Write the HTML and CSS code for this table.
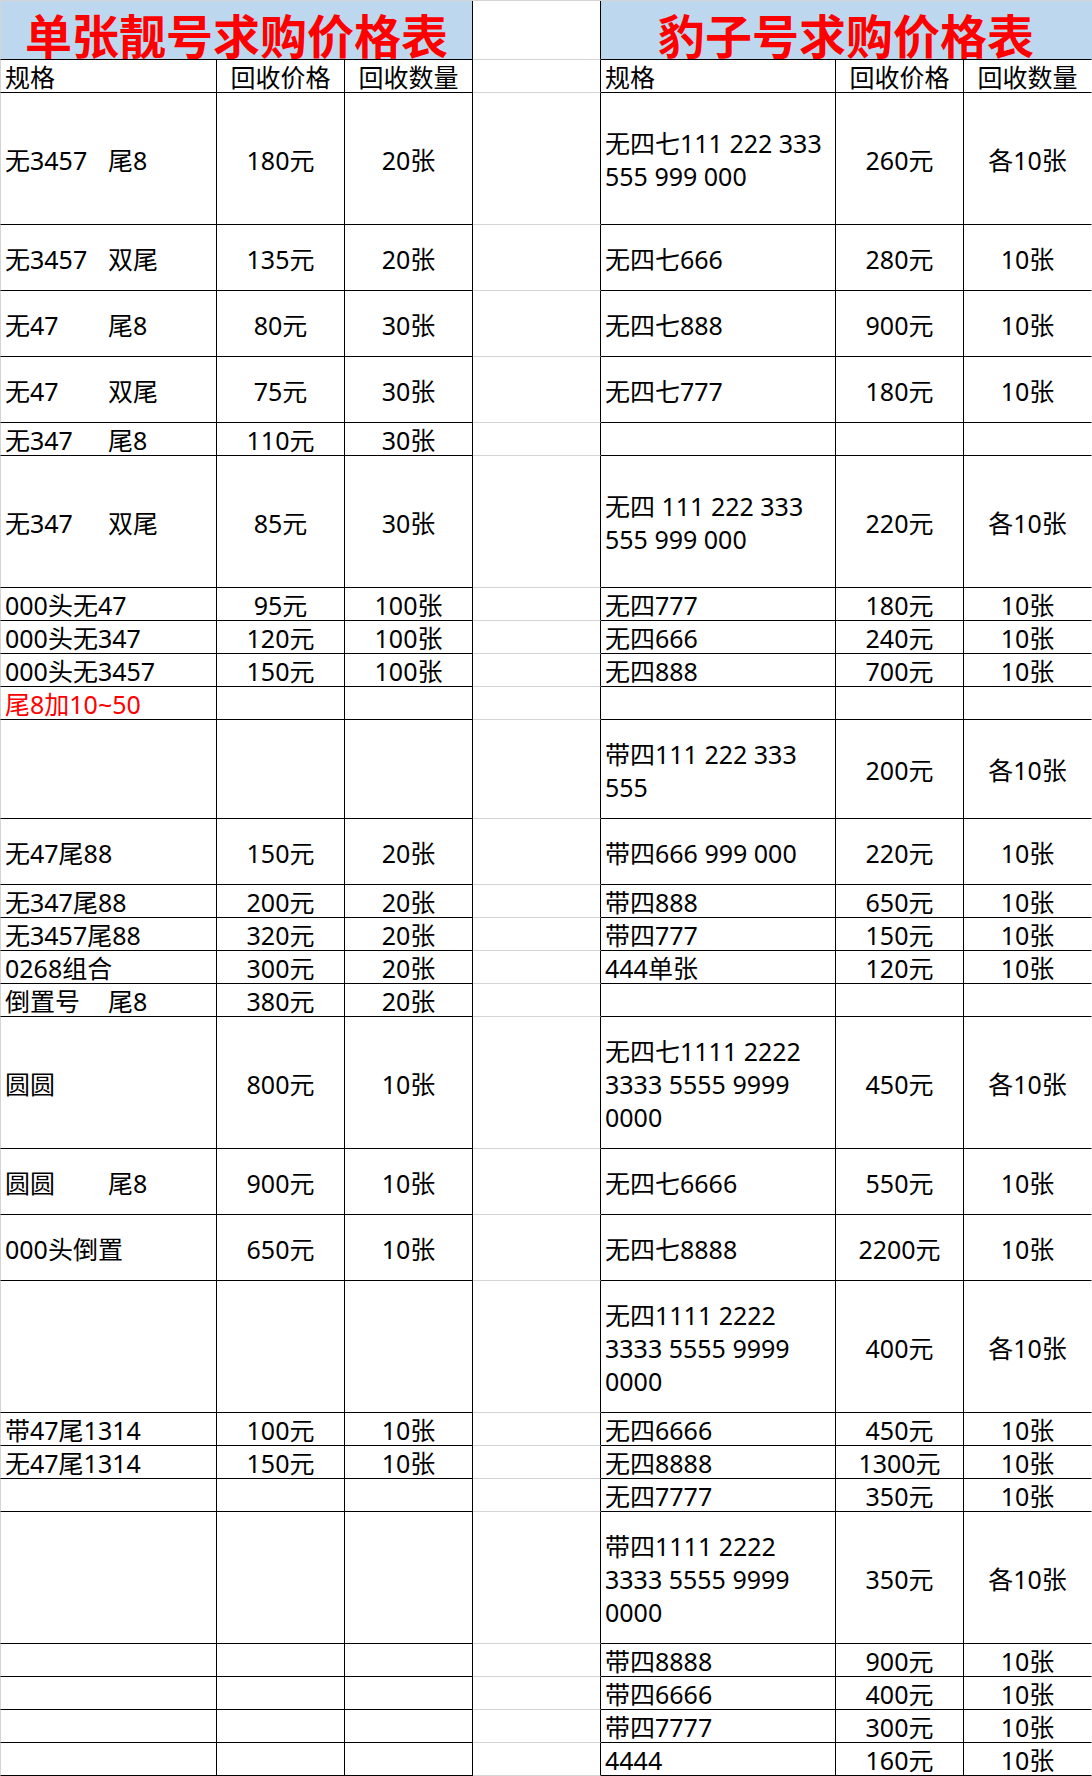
FILE: index.html
```html
<!DOCTYPE html>
<html lang="zh-CN">
<head>
<meta charset="utf-8">
<title>求购价格表</title>
<link rel="stylesheet" href="styles.css">
</head>
<body>
<div class="sheet">
  <div class="row title-row">
    <div class="title first"><span>单张靓号求购价格表</span></div>
    <div class="gap"></div>
    <div class="title"><span>豹子号求购价格表</span></div>
  </div>
  <div class="row h1">
    <div class="c first spec"><span>规格</span></div>
    <div class="c num"><span>回收价格</span></div>
    <div class="c num"><span>回收数量</span></div>
    <div class="gap"></div>
    <div class="c spec"><span>规格</span></div>
    <div class="c num"><span>回收价格</span></div>
    <div class="c num last"><span>回收数量</span></div>
  </div>

  <div class="row h4">
    <div class="c first spec"><span><span class="k">无3457</span>尾8</span></div>
    <div class="c num"><span>180元</span></div>
    <div class="c num"><span>20张</span></div>
    <div class="gap"></div>
    <div class="c spec"><span>无四七111 222 333<br>555 999 000</span></div>
    <div class="c num"><span>260元</span></div>
    <div class="c num last"><span>各10张</span></div>
  </div>
  <div class="row h2">
    <div class="c first spec"><span><span class="k">无3457</span>双尾</span></div>
    <div class="c num"><span>135元</span></div>
    <div class="c num"><span>20张</span></div>
    <div class="gap"></div>
    <div class="c spec"><span>无四七666</span></div>
    <div class="c num"><span>280元</span></div>
    <div class="c num last"><span>10张</span></div>
  </div>
  <div class="row h2">
    <div class="c first spec"><span><span class="k">无47</span>尾8</span></div>
    <div class="c num"><span>80元</span></div>
    <div class="c num"><span>30张</span></div>
    <div class="gap"></div>
    <div class="c spec"><span>无四七888</span></div>
    <div class="c num"><span>900元</span></div>
    <div class="c num last"><span>10张</span></div>
  </div>
  <div class="row h2">
    <div class="c first spec"><span><span class="k">无47</span>双尾</span></div>
    <div class="c num"><span>75元</span></div>
    <div class="c num"><span>30张</span></div>
    <div class="gap"></div>
    <div class="c spec"><span>无四七777</span></div>
    <div class="c num"><span>180元</span></div>
    <div class="c num last"><span>10张</span></div>
  </div>
  <div class="row h1">
    <div class="c first spec"><span><span class="k">无347</span>尾8</span></div>
    <div class="c num"><span>110元</span></div>
    <div class="c num"><span>30张</span></div>
    <div class="gap"></div>
    <div class="c spec"></div>
    <div class="c num"></div>
    <div class="c num last"></div>
  </div>
  <div class="row h4">
    <div class="c first spec"><span><span class="k">无347</span>双尾</span></div>
    <div class="c num"><span>85元</span></div>
    <div class="c num"><span>30张</span></div>
    <div class="gap"></div>
    <div class="c spec"><span>无四 111 222 333<br>555 999 000</span></div>
    <div class="c num"><span>220元</span></div>
    <div class="c num last"><span>各10张</span></div>
  </div>
  <div class="row h1">
    <div class="c first spec"><span>000头无47</span></div>
    <div class="c num"><span>95元</span></div>
    <div class="c num"><span>100张</span></div>
    <div class="gap"></div>
    <div class="c spec"><span>无四777</span></div>
    <div class="c num"><span>180元</span></div>
    <div class="c num last"><span>10张</span></div>
  </div>
  <div class="row h1">
    <div class="c first spec"><span>000头无347</span></div>
    <div class="c num"><span>120元</span></div>
    <div class="c num"><span>100张</span></div>
    <div class="gap"></div>
    <div class="c spec"><span>无四666</span></div>
    <div class="c num"><span>240元</span></div>
    <div class="c num last"><span>10张</span></div>
  </div>
  <div class="row h1">
    <div class="c first spec"><span>000头无3457</span></div>
    <div class="c num"><span>150元</span></div>
    <div class="c num"><span>100张</span></div>
    <div class="gap"></div>
    <div class="c spec"><span>无四888</span></div>
    <div class="c num"><span>700元</span></div>
    <div class="c num last"><span>10张</span></div>
  </div>
  <div class="row h1">
    <div class="c first spec red"><span>尾8加10~50</span></div>
    <div class="c num"></div>
    <div class="c num"></div>
    <div class="gap"></div>
    <div class="c spec"></div>
    <div class="c num"></div>
    <div class="c num last"></div>
  </div>
  <div class="row h3">
    <div class="c first spec"></div>
    <div class="c num"></div>
    <div class="c num"></div>
    <div class="gap"></div>
    <div class="c spec"><span>带四111 222 333<br>555</span></div>
    <div class="c num"><span>200元</span></div>
    <div class="c num last"><span>各10张</span></div>
  </div>
  <div class="row h2">
    <div class="c first spec"><span>无47尾88</span></div>
    <div class="c num"><span>150元</span></div>
    <div class="c num"><span>20张</span></div>
    <div class="gap"></div>
    <div class="c spec"><span>带四666 999 000</span></div>
    <div class="c num"><span>220元</span></div>
    <div class="c num last"><span>10张</span></div>
  </div>
  <div class="row h1">
    <div class="c first spec"><span>无347尾88</span></div>
    <div class="c num"><span>200元</span></div>
    <div class="c num"><span>20张</span></div>
    <div class="gap"></div>
    <div class="c spec"><span>带四888</span></div>
    <div class="c num"><span>650元</span></div>
    <div class="c num last"><span>10张</span></div>
  </div>
  <div class="row h1">
    <div class="c first spec"><span>无3457尾88</span></div>
    <div class="c num"><span>320元</span></div>
    <div class="c num"><span>20张</span></div>
    <div class="gap"></div>
    <div class="c spec"><span>带四777</span></div>
    <div class="c num"><span>150元</span></div>
    <div class="c num last"><span>10张</span></div>
  </div>
  <div class="row h1">
    <div class="c first spec"><span>0268组合</span></div>
    <div class="c num"><span>300元</span></div>
    <div class="c num"><span>20张</span></div>
    <div class="gap"></div>
    <div class="c spec"><span>444单张</span></div>
    <div class="c num"><span>120元</span></div>
    <div class="c num last"><span>10张</span></div>
  </div>
  <div class="row h1">
    <div class="c first spec"><span><span class="k">倒置号</span>尾8</span></div>
    <div class="c num"><span>380元</span></div>
    <div class="c num"><span>20张</span></div>
    <div class="gap"></div>
    <div class="c spec"></div>
    <div class="c num"></div>
    <div class="c num last"></div>
  </div>
  <div class="row h4">
    <div class="c first spec"><span>圆圆</span></div>
    <div class="c num"><span>800元</span></div>
    <div class="c num"><span>10张</span></div>
    <div class="gap"></div>
    <div class="c spec"><span>无四七1111 2222<br>3333 5555 9999<br>0000</span></div>
    <div class="c num"><span>450元</span></div>
    <div class="c num last"><span>各10张</span></div>
  </div>
  <div class="row h2">
    <div class="c first spec"><span><span class="k">圆圆</span>尾8</span></div>
    <div class="c num"><span>900元</span></div>
    <div class="c num"><span>10张</span></div>
    <div class="gap"></div>
    <div class="c spec"><span>无四七6666</span></div>
    <div class="c num"><span>550元</span></div>
    <div class="c num last"><span>10张</span></div>
  </div>
  <div class="row h2">
    <div class="c first spec"><span>000头倒置</span></div>
    <div class="c num"><span>650元</span></div>
    <div class="c num"><span>10张</span></div>
    <div class="gap"></div>
    <div class="c spec"><span>无四七8888</span></div>
    <div class="c num"><span>2200元</span></div>
    <div class="c num last"><span>10张</span></div>
  </div>
  <div class="row h4">
    <div class="c first spec"></div>
    <div class="c num"></div>
    <div class="c num"></div>
    <div class="gap"></div>
    <div class="c spec"><span>无四1111 2222<br>3333 5555 9999<br>0000</span></div>
    <div class="c num"><span>400元</span></div>
    <div class="c num last"><span>各10张</span></div>
  </div>
  <div class="row h1">
    <div class="c first spec"><span>带47尾1314</span></div>
    <div class="c num"><span>100元</span></div>
    <div class="c num"><span>10张</span></div>
    <div class="gap"></div>
    <div class="c spec"><span>无四6666</span></div>
    <div class="c num"><span>450元</span></div>
    <div class="c num last"><span>10张</span></div>
  </div>
  <div class="row h1">
    <div class="c first spec"><span>无47尾1314</span></div>
    <div class="c num"><span>150元</span></div>
    <div class="c num"><span>10张</span></div>
    <div class="gap"></div>
    <div class="c spec"><span>无四8888</span></div>
    <div class="c num"><span>1300元</span></div>
    <div class="c num last"><span>10张</span></div>
  </div>
  <div class="row h1">
    <div class="c first spec"></div>
    <div class="c num"></div>
    <div class="c num"></div>
    <div class="gap"></div>
    <div class="c spec"><span>无四7777</span></div>
    <div class="c num"><span>350元</span></div>
    <div class="c num last"><span>10张</span></div>
  </div>
  <div class="row h4">
    <div class="c first spec"></div>
    <div class="c num"></div>
    <div class="c num"></div>
    <div class="gap"></div>
    <div class="c spec"><span>带四1111 2222<br>3333 5555 9999<br>0000</span></div>
    <div class="c num"><span>350元</span></div>
    <div class="c num last"><span>各10张</span></div>
  </div>
  <div class="row h1">
    <div class="c first spec"></div>
    <div class="c num"></div>
    <div class="c num"></div>
    <div class="gap"></div>
    <div class="c spec"><span>带四8888</span></div>
    <div class="c num"><span>900元</span></div>
    <div class="c num last"><span>10张</span></div>
  </div>
  <div class="row h1">
    <div class="c first spec"></div>
    <div class="c num"></div>
    <div class="c num"></div>
    <div class="gap"></div>
    <div class="c spec"><span>带四6666</span></div>
    <div class="c num"><span>400元</span></div>
    <div class="c num last"><span>10张</span></div>
  </div>
  <div class="row h1">
    <div class="c first spec"></div>
    <div class="c num"></div>
    <div class="c num"></div>
    <div class="gap"></div>
    <div class="c spec"><span>带四7777</span></div>
    <div class="c num"><span>300元</span></div>
    <div class="c num last"><span>10张</span></div>
  </div>
  <div class="row h1">
    <div class="c first spec"></div>
    <div class="c num"></div>
    <div class="c num"></div>
    <div class="gap"></div>
    <div class="c spec"><span>4444</span></div>
    <div class="c num"><span>160元</span></div>
    <div class="c num last"><span>10张</span></div>
  </div>
</div>
</body>
</html>
```

FILE: styles.css
```css
* {
  box-sizing: border-box;
}

html, body {
  margin: 0;
  padding: 0;
  background: #ffffff;
}

body {
  font-family: "Noto Sans", "Noto Sans CJK SC", sans-serif;
  font-size: 25px;
  color: #000000;
}

.sheet {
  width: 1092px;
  border-top: 1px solid #d4d4d4;
}

.row {
  display: grid;
  grid-template-columns: 217px 128px 128px 128px 235px 128px 128px;
  grid-template-rows: 100%;
  overflow: visible;
}

.title-row { height: 59px; }
.h1 { height: 33px; }
.h2 { height: 66px; }
.h3 { height: 99px; }
.h4 { height: 132px; }

.c {
  display: flex;
  align-items: center;
  height: 100%;
  min-height: 0;
  border-right: 1px solid #000000;
  border-bottom: 1px solid #000000;
  line-height: 33px;
  white-space: nowrap;
  padding-top: 3px;
  overflow: visible;
}

.first {
  border-left: 1px solid #d4d4d4;
}

.spec {
  padding-left: 4px;
}

.num {
  justify-content: center;
}

.last {
  border-right-color: transparent;
}

.k {
  display: inline-block;
  width: 103px;
}

.red {
  color: #ff0000;
}

.gap {
  height: 100%;
  border-right: 1px solid #000000;
  border-bottom: 1px solid #d4d4d4;
}

.title {
  grid-column: span 3;
  display: flex;
  align-items: center;
  justify-content: center;
  height: 100%;
  background: #bdd7ee;
  color: #ff0000;
  font-family: "Noto Sans CJK SC", sans-serif;
  font-weight: bold;
  font-size: 47px;
  line-height: 48px;
  padding-top: 8px;
  border-right: 1px solid #000000;
  border-bottom: 1px solid #000000;
  white-space: nowrap;
  overflow: visible;
}

.title:last-child {
  border-right-color: transparent;
}
```
